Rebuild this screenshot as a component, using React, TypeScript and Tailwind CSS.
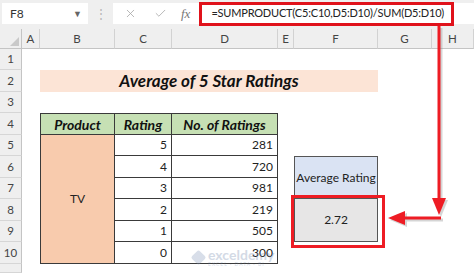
import React from "react";
import { X, Check } from "lucide-react";

const rowStart = [
  "row-start-2",
  "row-start-3",
  "row-start-4",
  "row-start-5",
  "row-start-6",
  "row-start-7",
  "row-start-8",
  "row-start-9",
  "row-start-10",
  "row-start-11",
  "row-start-12",
];

const colStart = [
  "col-start-2",
  "col-start-3",
  "col-start-4",
  "col-start-5",
  "col-start-6",
  "col-start-7",
  "col-start-8",
  "col-start-9",
];

const columns = ["A", "B", "C", "D", "E", "F", "G", "H"];

const ratings = [
  { stars: 5, count: 281 },
  { stars: 4, count: 720 },
  { stars: 3, count: 981 },
  { stars: 2, count: 219 },
  { stars: 1, count: 505 },
  { stars: 0, count: 300 },
];

const FormulaBar: React.FC = () => (
  <div className="flex h-[29px] items-start bg-[#efefef] pt-[3px]">
    <div className="ml-[2px] flex h-[21px] w-[86px] items-center justify-between bg-white pl-[8px] pr-[6px] text-[12px] text-[#333]">
      <span>F8</span>
      <span className="text-[9px] text-[#666]">▼</span>
    </div>
    <div className="flex h-[21px] w-[25px] items-center justify-center text-[12px] text-[#b5b5b5]">⋮</div>
    <div className="flex h-[21px] flex-1 items-center bg-white">
      <X className="ml-[11px] h-[13px] w-[13px] text-[#a8a8a8]" strokeWidth={1.5} />
      <Check className="ml-[17px] h-[13px] w-[13px] text-[#a8a8a8]" strokeWidth={1.5} />
      <span
        className="ml-[14px] text-[13px] italic text-[#777]"
        style={{ fontFamily: '"Liberation Serif", serif' }}
      >
        fx
      </span>
      <div className="ml-[9px] flex h-[24px] w-[255px] items-center whitespace-nowrap border-[3px] border-[#e0121b] pl-[9px] text-[11px] tracking-[-0.2px] text-[#222]">
        =SUMPRODUCT(C5:C10,D5:D10)/SUM(D5:D10)
      </div>
    </div>
  </div>
);

const Arrows: React.FC = () => (
  <svg className="pointer-events-none absolute left-0 top-0" width={474} height={273}>
    <g fill="#8a8a8a" stroke="#8a8a8a" opacity={0.35} transform="translate(2,2)">
      <line x1={439} y1={26} x2={439} y2={200} strokeWidth={3} fill="none" />
      <polygon points="432,198 446,198 439,215" stroke="none" />
      <line x1={441} y1={218} x2={404} y2={218} strokeWidth={3} fill="none" />
      <polygon points="405,211 405,225 388,218" stroke="none" />
    </g>
    <g fill="#ee1c24" stroke="#ee1c24">
      <line x1={439} y1={26} x2={439} y2={200} strokeWidth={3} fill="none" />
      <polygon points="432,198 446,198 439,215" stroke="none" />
      <line x1={441} y1={218} x2={404} y2={218} strokeWidth={3} fill="none" />
      <polygon points="405,211 405,225 388,218" stroke="none" />
      <rect x={292.5} y={196.5} width={91} height={50} strokeWidth={3} fill="none" />
    </g>
  </svg>
);

const App: React.FC = () => {
  return (
    <div
      className="relative h-[273px] w-[474px] overflow-hidden bg-white"
      style={{ fontFamily: 'Lato, "Open Sans", sans-serif' }}
    >
      <FormulaBar />
      <div className="grid h-[244px] grid-cols-[22px_18px_75px_57px_106px_16px_84px_54px_42px] grid-rows-[20px_21px_22px_21px_22px_21px_22px_21px_22px_21px_22px_1fr] text-[12px] text-[#222]">
        {/* corner */}
        <div className="col-start-1 row-start-1 flex items-end justify-end border-b border-r border-[#c4c4c4] bg-[#efefef] p-[2px]">
          <div className="h-0 w-0 border-b-[9px] border-l-[9px] border-b-[#c9c9c9] border-l-transparent" />
        </div>
        {columns.map((c, i) => (
          <div
            key={c}
            className={`${colStart[i]} row-start-1 flex items-center justify-center border-b border-r border-[#d2d2d2] border-b-[#c4c4c4] bg-[#efefef] text-[11.5px] text-[#444]`}
          >
            {c}
          </div>
        ))}
        {rowStart.map((r, i) => (
          <div
            key={r}
            className={`col-start-1 ${r} flex items-center justify-center border-b border-r border-[#d6d6d6] border-r-[#c4c4c4] bg-[#efefef] text-[11.5px] text-[#444]`}
          >
            {i < 10 ? i + 1 : ""}
          </div>
        ))}

        {/* title */}
        <div className="col-span-5 col-start-3 row-start-3 flex items-center justify-center bg-[#fce4d6] text-[17px] font-bold italic text-[#111]">
          Average of 5 Star Ratings
        </div>

        {/* table header */}
        <div className="col-start-3 row-start-5 flex items-center justify-center border border-[#3a3a3a] bg-[#c6e0b4] text-[14px] font-bold italic text-[#111]">
          Product
        </div>
        <div className="col-start-4 row-start-5 flex items-center justify-center border-y border-r border-[#3a3a3a] bg-[#c6e0b4] text-[14px] font-bold italic text-[#111]">
          Rating
        </div>
        <div className="col-start-5 row-start-5 flex items-center justify-center border-y border-r border-[#3a3a3a] bg-[#c6e0b4] text-[14px] font-bold italic text-[#111]">
          No. of Ratings
        </div>

        <div className="col-start-3 row-span-6 row-start-6 flex items-center justify-center border-x border-b border-[#3a3a3a] bg-[#f8cbad]">
          TV
        </div>
        {ratings.map((r, i) => (
          <React.Fragment key={r.stars}>
            <div
              className={`col-start-4 ${rowStart[i + 4]} flex items-center justify-end border-b border-r border-[#3a3a3a] pr-[4px]`}
            >
              {r.stars}
            </div>
            <div
              className={`col-start-5 ${rowStart[i + 4]} flex items-center justify-end border-b border-r border-[#3a3a3a] pr-[4px]`}
            >
              {r.count}
            </div>
          </React.Fragment>
        ))}

        {/* result */}
        <div className="col-start-7 row-span-2 row-start-7 flex items-center justify-center border border-[#555] bg-[#dae3f3]">
          Average Rating
        </div>
        <div className="col-start-7 row-span-2 row-start-9 flex items-center justify-center border-x border-b border-[#555] bg-[#e7e6e6]">
          2.72
        </div>
      </div>

      {/* watermark */}
      <div className="pointer-events-none absolute left-[193px] top-[248px] flex items-center gap-[4px] opacity-30">
        <div className="h-[11px] w-[11px] rotate-45 rounded-[2px] bg-[#7f95b8]" />
        <div className="flex flex-col leading-none">
          <span className="text-[14px] font-bold text-[#6f86ab]">exceldemy</span>
          <span className="text-[5px] tracking-[1px] text-[#6f86ab]">EXCEL · DATA · BI</span>
        </div>
      </div>

      <Arrows />
    </div>
  );
};

export default App;
